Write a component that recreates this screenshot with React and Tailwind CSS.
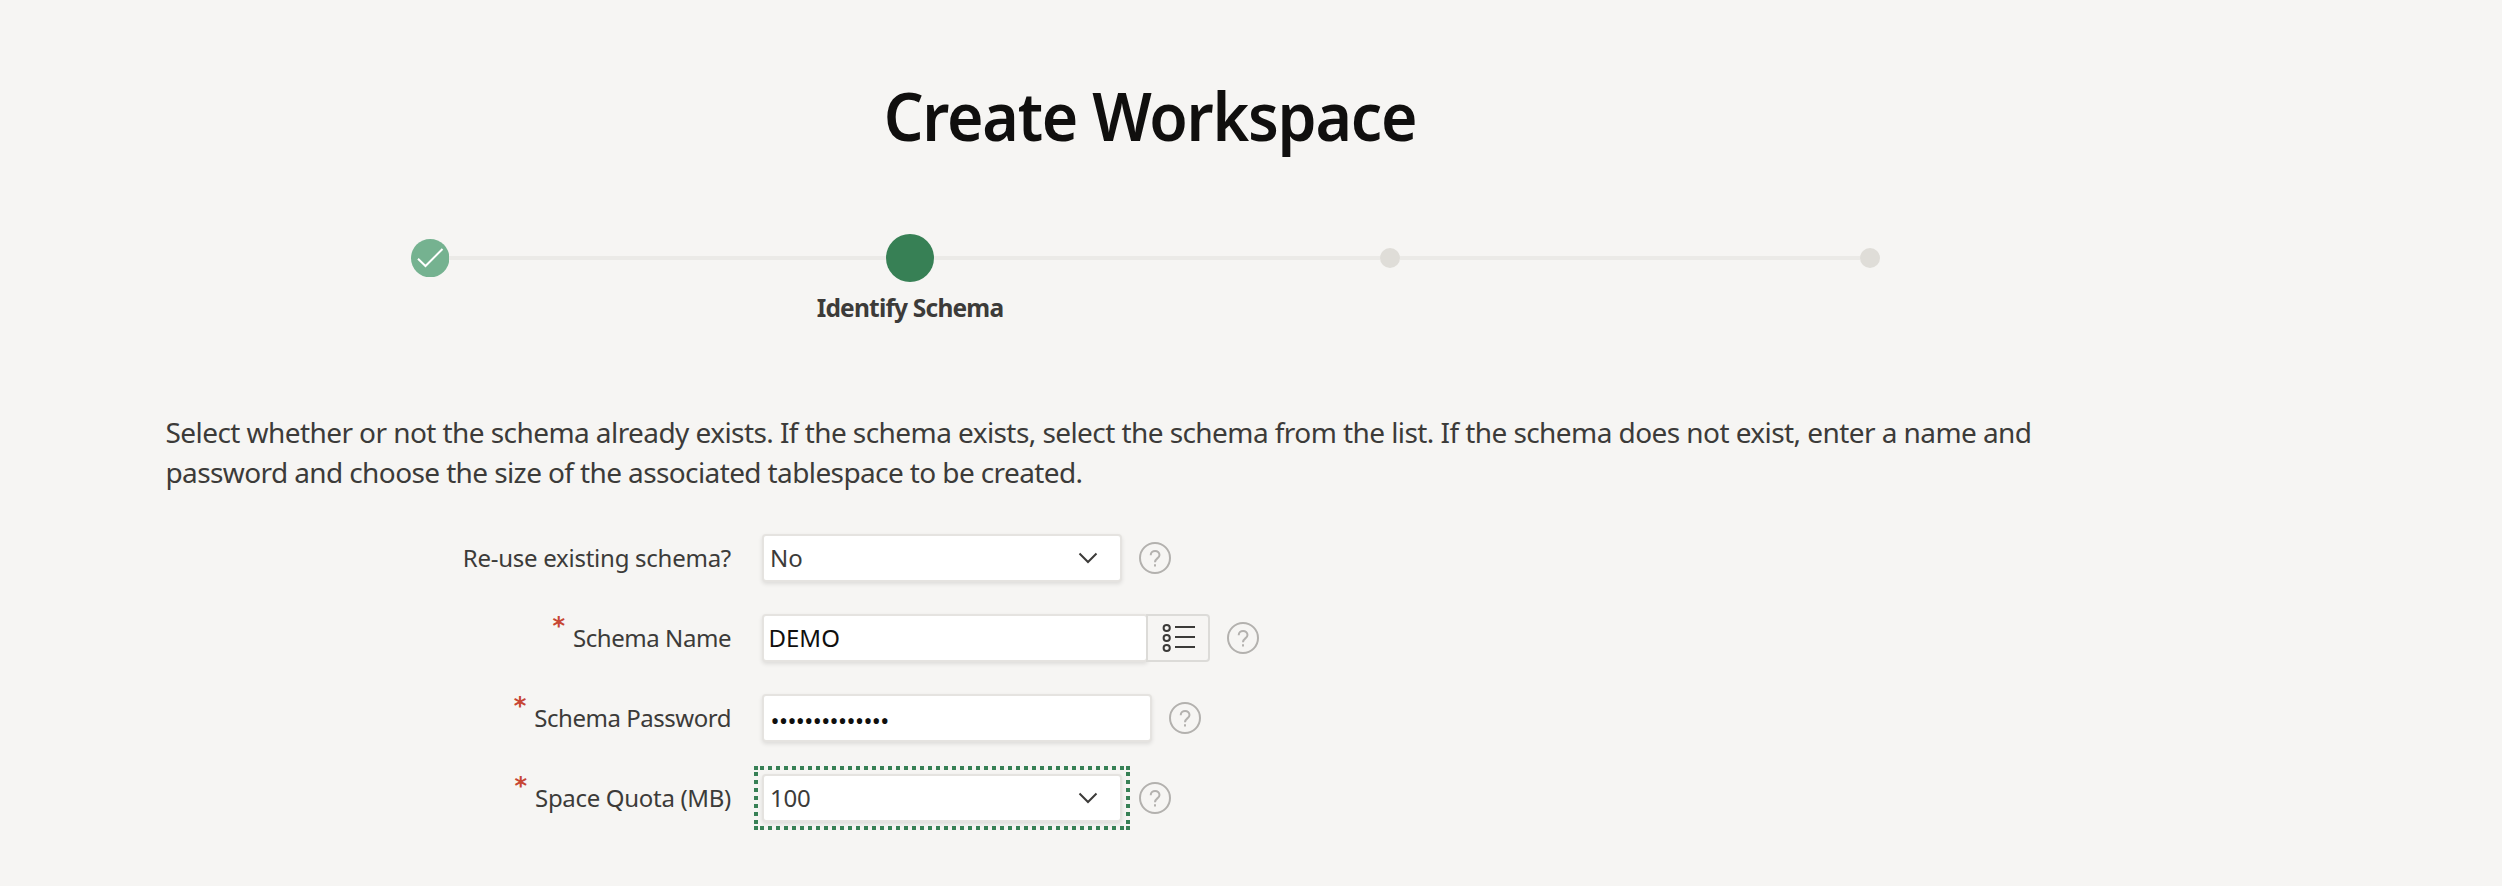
function HelpIcon() {
  return (
    <svg viewBox="0 0 32 32" fill="none" className="ml-[16.7px] h-8 w-8 shrink-0 text-[#b3b1ae]" stroke="currentColor" strokeWidth="2">
      <circle cx="16" cy="16" r="15" />
      <path d="M11.7 13.2C11.7 7.5 20.5 7.5 20.5 13C20.5 16.4 16 16.4 16 20.2" />
      <path d="M16 22.2V24.4" />
    </svg>
  );
}

function Chevron() {
  return (
    <svg viewBox="0 0 20 12" fill="none" className="mr-[22px] h-3 w-5 text-[#3c3b39]" stroke="currentColor" strokeWidth="2">
      <path d="M1.5 1.5L10 10L18.5 1.5" />
    </svg>
  );
}

function ListIcon() {
  return (
    <svg viewBox="0 0 34 30" fill="none" className="ml-0.5 h-[30px] w-[34px] text-[#3c3b39]" stroke="currentColor" strokeWidth="2">
      {[5, 15, 25].map((y) => (
        <g key={y}>
          <circle cx="4.7" cy={y} r="3.1" />
          <path d={`M13 ${y - 1}H33`} />
        </g>
      ))}
    </svg>
  );
}

function FocusRing() {
  return (
    <svg viewBox="0 0 376 64" className="pointer-events-none absolute -top-2 -left-2 h-16 w-[376px]" fill="#378055" stroke="#378055" shapeRendering="crispEdges">
      <g strokeWidth="4" strokeDasharray="4 4">
        <path d="M6 2H370" />
        <path d="M6 62H370" />
        <path d="M2 6V58" />
        <path d="M374 6V58" />
      </g>
      <g stroke="none">
        <rect x="0" y="0" width="4" height="4" />
        <rect x="372" y="0" width="4" height="4" />
        <rect x="0" y="60" width="4" height="4" />
        <rect x="372" y="60" width="4" height="4" />
      </g>
    </svg>
  );
}

function Row({ label, labelClass, required, children }) {
  return (
    <div className="flex h-12 items-center">
      <div className="mr-[31px] flex h-12 w-[731px] justify-end">
        {required && (
          <span className="mr-2 h-6 font-['DejaVu_Sans',sans-serif] text-[24px] leading-6 font-bold text-[#c74634]">*</span>
        )}
        <label className={`text-[24px] leading-[48px] text-[#3c3b39] ${labelClass}`}>{label}</label>
      </div>
      {children}
    </div>
  );
}

const field = 'flex h-12 shrink-0 items-center rounded-[4px] border-2 border-[#e5e3e0] bg-white shadow-[0_2px_4px_rgba(0,0,0,0.1)]';

function Select({ value, focused, textClass }) {
  return (
    <div className={`relative w-[360px] justify-between ${field}`}>
      <span className={`text-[24px] leading-[44px] text-[#3c3b39] ${textClass}`}>{value}</span>
      <Chevron />
      {focused && <div className="absolute -top-0.5 -left-0.5"><FocusRing /></div>}
    </div>
  );
}

function Line({ className }) {
  return <div className={`h-1 bg-[#ebeae7] ${className}`} />;
}

export default function App() {
  return (
    <div className="h-[886px] w-[2502px] overflow-hidden bg-[#f6f5f3] font-['Noto_Sans',sans-serif]">
      <h1 className="w-[2300px] scale-x-[0.947] pt-[75px] text-center text-[66px] leading-[80px] font-semibold tracking-[-1.3px] text-[#100f0e]">
        Create Workspace
      </h1>

      <div className="mt-[79px] ml-[410.8px] flex h-12 items-center">
        <svg viewBox="0 0 38.4 38.4" className="h-[38.4px] w-[38.4px]" fill="none">
          <circle cx="19.2" cy="19.2" r="19.2" fill="#75b290" />
          <path d="M7 19.7L14.5 27L31.5 10" stroke="#fff" strokeWidth="2" />
        </svg>
        <Line className="w-[436.8px]" />
        <div className="h-12 w-12 rounded-full bg-[#378055]" />
        <Line className="w-[446px]" />
        <div className="h-5 w-5 rounded-full bg-[#dfddd8]" />
        <Line className="w-[460px]" />
        <div className="h-5 w-5 rounded-full bg-[#dfddd8]" />
      </div>
      <div className="mt-[10px] w-[1820px] text-center text-[24.5px] leading-8 font-bold tracking-[-0.8px] text-[#3c3b39]">
        Identify Schema
      </div>

      <p className="mt-[88px] ml-[165.5px] text-[28px] leading-10 tracking-[-0.57px] whitespace-nowrap text-[#3c3b39]">
        Select whether or not the schema already exists. If the schema exists, select the schema from the list. If the schema does not exist, enter a name and
        <br />
        <span className="tracking-[-0.61px]">password and choose the size of the associated tablespace to be created.</span>
      </p>

      <div className="mt-[42px] flex flex-col gap-8">
        <Row label="Re-use existing schema?" labelClass="tracking-[-0.26px]">
          <Select value="No" textClass="pl-[6px]" />
          <HelpIcon />
        </Row>
        <Row label="Schema Name" labelClass="tracking-[-0.45px]" required>
          <div className={`w-[386px] ${field}`}>
            <span className="pl-[4.5px] text-[24px] leading-[44px] text-[#100f0e]">DEMO</span>
          </div>
          <div className="relative -ml-0.5 flex h-12 w-16 items-center justify-center rounded-r-[4px] border-2 border-[#dcdbd8] bg-[#f6f5f3]">
            <ListIcon />
          </div>
          <HelpIcon />
        </Row>
        <Row label="Schema Password" labelClass="tracking-[-0.47px]" required>
          <div className={`w-[390px] ${field}`}>
            <span className="pt-[5px] pl-[6.5px] text-[24px] leading-[38px] tracking-[-0.58px] text-[#100f0e]">••••••••••••••</span>
          </div>
          <HelpIcon />
        </Row>
        <Row label="Space Quota (MB)" labelClass="tracking-[-0.31px]" required>
          <Select value="100" focused textClass="pl-[6px] tracking-[-0.2px]" />
          <HelpIcon />
        </Row>
      </div>
    </div>
  );
}
